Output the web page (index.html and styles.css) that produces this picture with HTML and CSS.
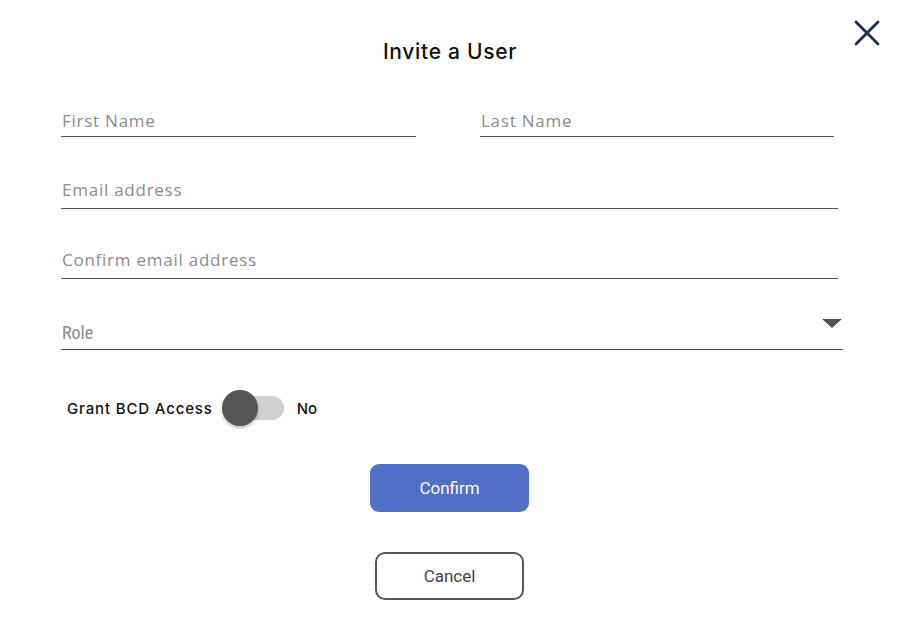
FILE: index.html
```html
<!DOCTYPE html>
<html lang="en">
<head>
<meta charset="utf-8">
<title>Invite a User</title>
<link rel="stylesheet" href="styles.css">
</head>
<body>
<div class="dialog">
  <button class="close" aria-label="Close">
    <svg width="26" height="26" viewBox="0 0 26 26"><path d="M2 2 L24 24 M24 2 L2 24" stroke="#1e2b4a" stroke-width="2.8" stroke-linecap="round" fill="none"/></svg>
  </button>
  <h1 class="title">Invite a User</h1>
  <form class="form">
    <div class="row">
      <label class="field half"><span class="ph">First Name</span></label>
      <label class="field half second"><span class="ph">Last Name</span></label>
    </div>
    <label class="field wide gap-email"><span class="ph">Email address</span></label>
    <label class="field wide gap-confirm"><span class="ph">Confirm email address</span></label>
    <label class="field select gap-role"><span class="ph role">Role</span><span class="caret"></span></label>
    <div class="access">
      <span class="access-label">Grant BCD Access</span>
      <span class="switch"><span class="track"></span><span class="knob"></span></span>
      <span class="access-value">No</span>
    </div>
    <div class="actions">
      <button type="button" class="btn primary">Confirm</button>
      <button type="button" class="btn outline">Cancel</button>
    </div>
  </form>
</div>
</body>
</html>
```
FILE: styles.css
```css
* { box-sizing: border-box; }
html, body { margin: 0; padding: 0; background: #fff; }
body { font-family: "Open Sans", "DejaVu Sans", sans-serif; }

.dialog {
  position: relative;
  width: 900px;
  height: 641px;
  padding-top: 37px;
}

.close {
  position: absolute;
  top: 20px;
  right: 20px;
  width: 26px;
  height: 26px;
  padding: 0;
  border: 0;
  background: none;
  display: flex;
}

.title {
  margin: 0;
  height: 30px;
  line-height: 30px;
  text-align: center;
  font-family: Inter, "Open Sans", sans-serif;
  font-size: 21px;
  font-weight: 500;
  color: #111;
  letter-spacing: 0.7px;
}

.form {
  display: flex;
  flex-direction: column;
  padding-left: 61px;
}

.row {
  display: flex;
  gap: 64px;
  margin-top: 29px;
}

.field {
  display: flex;
  align-items: flex-end;
  height: 41px;
  padding-bottom: 3px;
  border-bottom: 1px solid #555;
}
.half { width: 355px; }
.half.second { width: 354px; }
.wide { width: 777px; padding-bottom: 6px; }
.select { width: 782px; justify-content: space-between; align-items: flex-end; padding-bottom: 4px; }

.gap-email { margin-top: 31px; }
.gap-confirm { margin-top: 29px; }
.gap-role { margin-top: 30px; }

.ph {
  font-size: 17px;
  line-height: 24px;
  color: #8c8c8c;
  letter-spacing: 0.75px;
  padding-left: 1px;
}
.ph.role {
  font-family: "Liberation Sans Narrow", "Roboto Condensed", "Liberation Sans", sans-serif;
  font-size: 18px;
  letter-spacing: 0;
  color: #8a8a8a;
}

.caret {
  align-self: flex-start;
  margin-top: 10px;
  width: 0;
  height: 0;
  border-left: 10px solid transparent;
  border-right: 10px solid transparent;
  border-top: 9px solid #555;
  margin-right: 1px;
}

.access {
  display: flex;
  align-items: center;
  height: 38px;
  margin-top: 39px;
  padding-left: 6px;
  font-family: Inter, "Open Sans", sans-serif;
  font-size: 15px;
  font-weight: 500;
  color: #111;
}
.access-label {
  letter-spacing: 0.85px;
}
.switch {
  position: relative;
  width: 62px;
  height: 38px;
  margin-left: 9px;
}
.track {
  position: absolute;
  left: 6px;
  top: 7px;
  width: 56px;
  height: 24px;
  border-radius: 12px;
  background: #d0d0d0;
}
.knob {
  position: absolute;
  left: 0;
  top: 1px;
  width: 36px;
  height: 36px;
  border-radius: 50%;
  background: #555;
  box-shadow: 0 2px 3px rgba(0,0,0,0.25);
}
.access-value {
  margin-left: 13px;
}

.actions {
  display: flex;
  flex-direction: column;
  align-items: center;
  width: 777px;
}
.btn {
  font-family: Roboto, "Liberation Sans", sans-serif;
  font-size: 17px;
  font-weight: 400;
  height: 48px;
  border-radius: 9px;
  cursor: pointer;
}
.primary {
  margin-top: 37px;
  width: 159px;
  border: 0;
  background: #5170c7;
  color: #fff;
}
.outline {
  margin-top: 40px;
  width: 149px;
  background: #fff;
  border: 2px solid #555;
  border-radius: 10px;
  color: #444;
}
```
